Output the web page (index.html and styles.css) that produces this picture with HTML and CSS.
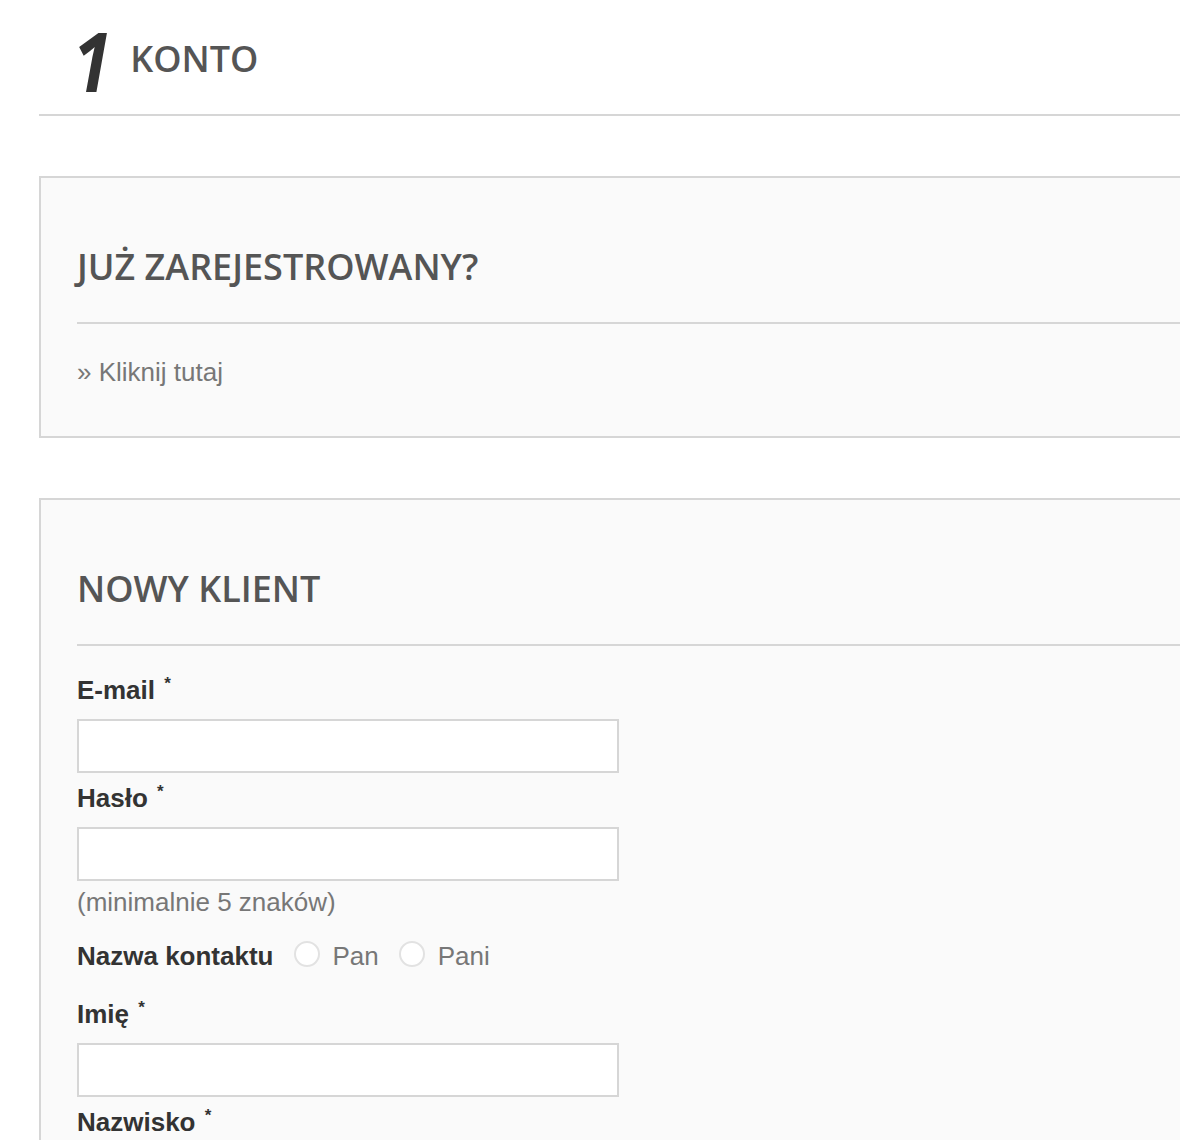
FILE: index.html
```html
<!DOCTYPE html>
<html lang="pl">

<head>
    <meta charset="utf-8">
    <title>Konto</title>

    <link rel="stylesheet" href="styles.css">

</head>

<body>

    <div class="page">

        <div class="step">
            <span class="step-num">1</span>
            <h1 class="step-title">KONTO</h1>
        </div>

        <div class="panel">
            <h2 class="panel-title">JUŻ ZAREJESTROWANY?</h2>
            <a class="more" href="#">» Kliknij tutaj</a>
        </div>

        <div class="panel">
            <h2 class="panel-title">NOWY KLIENT</h2>

            <form class="form">
                <label class="label first">E-mail <sup>*</sup></label>
                <input type="text" class="field">

                <label class="label">Hasło <sup>*</sup></label>
                <input type="password" class="field">
                <p class="hint">(minimalnie 5 znaków)</p>

                <div class="radios">
                    <span class="label">Nazwa kontaktu</span>
                    <span class="radio"><i class="dot"></i>Pan</span>
                    <span class="radio"><i class="dot"></i>Pani</span>
                </div>

                <label class="label">Imię <sup>*</sup></label>
                <input type="text" class="field">

                <label class="label">Nazwisko <sup>*</sup></label>
                <input type="text" class="field">
            </form>
        </div>

    </div>

</body>

</html>
```

FILE: styles.css
```css
* {
    margin: 0;
    padding: 0;
    box-sizing: border-box;
}

body {
    background: #fff;
    overflow-x: hidden;
    font-family: "Liberation Sans", Arial, sans-serif;
}

.page {
    width: 1400px;
    margin-left: 39px;
}

.step {
    display: flex;
    align-items: center;
    height: 116px;
    padding-left: 34px;
    border-bottom: 2px solid #d6d6d6;
}

.step-num {
    font-family: "Open Sans", sans-serif;
    font-style: italic;
    font-weight: 700;
    font-size: 82px;
    line-height: 1;
    color: #333;
    margin-top: 6px;
    margin-right: 18px;
    transform: scaleX(0.85);
    transform-origin: left center;
}

.step-title {
    font-family: "Open Sans", sans-serif;
    font-weight: 600;
    font-size: 36px;
    color: #555;
    margin-left: -6px;
    margin-top: 2px;
}

.panel {
    margin-top: 60px;
    background: #fafafa;
    border: 2px solid #d6d6d6;
    border-right: none;
    padding: 67px 0 46px 36px;
}

.panel-title {
    font-family: "Open Sans", sans-serif;
    font-weight: 600;
    font-size: 36px;
    line-height: 43px;
    color: #555;
    padding-bottom: 34px;
    border-bottom: 2px solid #d6d6d6;
    margin-bottom: 31px;
}

.more {
    display: block;
    font-size: 26px;
    line-height: 35px;
    color: #777;
    text-decoration: none;
}

.form {
    margin-top: -2px;
}

.label {
    display: block;
    font-size: 26px;
    line-height: 30px;
    font-weight: bold;
    color: #333;
    margin-top: 10px;
    margin-bottom: 14px;
}

.label.first {
    margin-top: 0;
}

.label sup {
    font-size: 17px;
    vertical-align: top;
    line-height: 1;
    margin-left: 2px;
}

.field {
    display: block;
    width: 542px;
    height: 54px;
    background: #fff;
    border: 2px solid #d6d6d6;
    outline: none;
}

.hint {
    font-size: 26px;
    line-height: 30px;
    color: #777;
    margin-top: 6px;
}

.radios {
    display: flex;
    align-items: center;
    margin-top: 24px;
    margin-bottom: 28px;
}

.radios .label {
    margin: 0 20px 0 0;
}

.radio {
    display: flex;
    align-items: center;
    font-size: 26px;
    line-height: 30px;
    color: #777;
    margin-right: 20px;
}

.dot {
    width: 26px;
    height: 26px;
    border: 2px solid #e2e2e2;
    border-radius: 50%;
    background: #fff;
    margin-right: 13px;
    margin-top: -4px;
}
```
